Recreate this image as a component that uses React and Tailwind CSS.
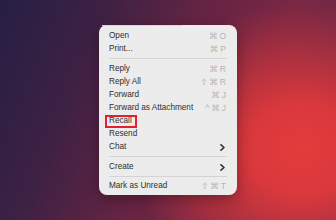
import React from "react";

const font = { fontFamily: '"Liberation Sans", "DejaVu Sans", Arial, sans-serif' };

function Chevron() {
  return (
    <svg width="5" height="7" viewBox="0 0 5 7" className="mr-[1px]">
      <path d="M1 0.8 L4 3.5 L1 6.2" fill="none" stroke="#333333" strokeWidth="1.6" strokeLinecap="round" strokeLinejoin="round" />
    </svg>
  );
}

function Row({ label, sc, chevron, boxed }) {
  return (
    <div className="relative flex h-[13px] items-center justify-between pl-[10px] pr-[11px] pt-[1px]">
      <span className="text-[8.2px] leading-none text-[#2f2f2f]">{label}</span>
      {sc && (
        <span className="flex items-center gap-[2px] text-[8.5px] leading-none text-[#b4b4b4]" style={font}>
          {sc.map((c, i) => (
            <span key={i}>{c}</span>
          ))}
        </span>
      )}
      {chevron && <Chevron />}
      {boxed && (
        <div className="absolute left-[6px] top-[1px] h-[13px] w-[32px] border-2 border-[#e3202b]" />
      )}
    </div>
  );
}

function Sep({ h }) {
  return (
    <div className={`flex ${h} items-center px-[10px]`}>
      <div className="h-px w-full bg-[#d4d4d4]" />
    </div>
  );
}

export default function App() {
  return (
    <div
      className="h-[220px] w-[336px] overflow-hidden bg-[radial-gradient(ellipse_65%_85%_at_90%_68%,#e43c3c_0%,#d9383c_25%,rgba(190,45,60,0)_78%),linear-gradient(112deg,#261f43_0%,#3d2143_25%,#642443_48%,#7a2743_70%,#6a2a46_100%)] pl-[99px] pt-[25px]"
      style={font}
    >
      <div className="relative flex h-[170px] w-[138px] flex-col rounded-[8px] bg-[#ececec] pt-[4px] pb-[3px] shadow-[0_4px_14px_rgba(20,0,10,0.35)]">
        <div className="absolute left-[3px] top-0 h-px w-[80px] bg-[#bfe0e8]" />
        <Row label="Open" sc={["⌘", "O"]} />
        <Row label="Print..." sc={["⌘", "P"]} />
        <Sep h="h-[7px]" />
        <Row label="Reply" sc={["⌘", "R"]} />
        <Row label="Reply All" sc={["⇧", "⌘", "R"]} />
        <Row label="Forward" sc={["⌘", "J"]} />
        <Row label="Forward as Attachment" sc={["^", "⌘", "J"]} />
        <Row label="Recall" boxed />
        <Row label="Resend" />
        <Row label="Chat" chevron />
        <Sep h="h-[7px]" />
        <Row label="Create" chevron />
        <Sep h="h-[6px]" />
        <Row label="Mark as Unread" sc={["⇧", "⌘", "T"]} />
      </div>
    </div>
  );
}
